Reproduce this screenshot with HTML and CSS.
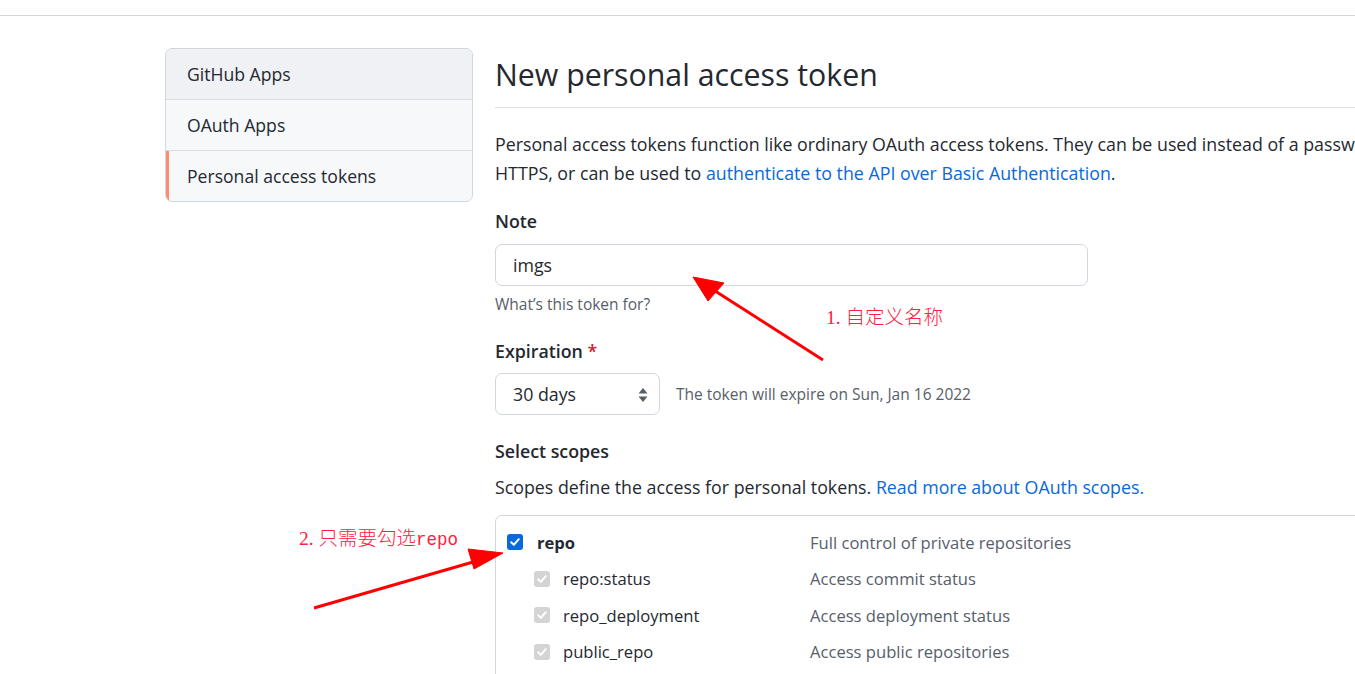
FILE: index.html
```html
<!DOCTYPE html>
<html lang="en">
<head>
<meta charset="utf-8">
<title>New personal access token</title>
<link rel="stylesheet" href="styles.css">
</head>
<body>
<div class="topbar"></div>
<div class="layout">
  <nav class="sidebar">
    <a class="side-item hovered">GitHub Apps</a>
    <a class="side-item">OAuth Apps</a>
    <a class="side-item selected">Personal access tokens</a>
  </nav>
  <main class="main">
    <h2 class="subhead">New personal access token</h2>
    <p class="intro">Personal access tokens function like ordinary OAuth access tokens. They can be used instead of a password for Git over HTTPS, or can be used to <a class="link">authenticate to the API over Basic Authentication</a>.</p>

    <label class="field-label">Note</label>
    <div class="input">imgs</div>
    <p class="hint">What’s this token for?</p>

    <label class="field-label exp-label">Expiration <span class="req">*</span></label>
    <div class="exp-row">
      <div class="select">30 days
        <svg class="updown" width="10" height="16" viewBox="0 0 10 16"><path d="M5 1 L9.5 6.5 H0.5 Z M5 15 L9.5 9.5 H0.5 Z" fill="#57606a"/></svg>
      </div>
      <span class="exp-note">The token will expire on Sun, Jan 16 2022</span>
    </div>

    <label class="field-label scopes-label">Select scopes</label>
    <p class="scopes-desc">Scopes define the access for personal tokens. <a class="link">Read more about OAuth scopes.</a></p>

    <div class="scopes">
      <div class="scope-row">
        <div class="scope-name">
          <span class="cb checked"><svg width="12" height="12" viewBox="0 0 12 12"><path d="M2.2 6.3 L4.8 8.8 L9.8 3.2" stroke="#fff" stroke-width="2" fill="none" stroke-linecap="round" stroke-linejoin="round"/></svg></span>
          <strong>repo</strong>
        </div>
        <div class="scope-desc">Full control of private repositories</div>
      </div>
      <div class="scope-row sub">
        <div class="scope-name">
          <span class="cb disabled"><svg width="12" height="12" viewBox="0 0 12 12"><path d="M2.2 6.3 L4.8 8.8 L9.8 3.2" stroke="#fff" stroke-width="2" fill="none" stroke-linecap="round" stroke-linejoin="round"/></svg></span>
          <span>repo:status</span>
        </div>
        <div class="scope-desc">Access commit status</div>
      </div>
      <div class="scope-row sub">
        <div class="scope-name">
          <span class="cb disabled"><svg width="12" height="12" viewBox="0 0 12 12"><path d="M2.2 6.3 L4.8 8.8 L9.8 3.2" stroke="#fff" stroke-width="2" fill="none" stroke-linecap="round" stroke-linejoin="round"/></svg></span>
          <span>repo_deployment</span>
        </div>
        <div class="scope-desc">Access deployment status</div>
      </div>
      <div class="scope-row sub">
        <div class="scope-name">
          <span class="cb disabled"><svg width="12" height="12" viewBox="0 0 12 12"><path d="M2.2 6.3 L4.8 8.8 L9.8 3.2" stroke="#fff" stroke-width="2" fill="none" stroke-linecap="round" stroke-linejoin="round"/></svg></span>
          <span>public_repo</span>
        </div>
        <div class="scope-desc">Access public repositories</div>
      </div>
    </div>
  </main>
</div>

<div class="annot annot-1">1. 自定义名称</div>
<div class="annot annot-2">2. 只需要勾选<span class="mono">repo</span></div>
<svg class="arrows" width="1355" height="674" viewBox="0 0 1355 674">
  <g fill="#ff0000" stroke="#ff0000">
    <line x1="823" y1="360" x2="712" y2="289" stroke-width="3"/>
    <polygon points="693,277 724,283 708,301" stroke-width="1"/>
    <line x1="314" y1="608" x2="480" y2="560" stroke-width="3"/>
    <polygon points="503,553 468,549 474,569" stroke-width="1"/>
  </g>
</svg>
</body>
</html>
```

FILE: styles.css
```css
html, body {
  margin: 0;
  padding: 0;
  overflow: hidden;
  background: #ffffff;
}
body {
  width: 1355px;
  height: 674px;
  position: relative;
  font-family: "Open Sans", "Noto Sans", "Liberation Sans", sans-serif;
  font-size: 17.8px;
  color: #24292f;
}
.topbar {
  height: 15px;
  border-bottom: 1px solid #d0d7de;
}
.layout {
  display: flex;
  align-items: flex-start;
  padding-left: 165px;
  margin-top: 32px;
}
.sidebar {
  width: 306px;
  flex: none;
  border: 1px solid #d0d7de;
  border-radius: 7px;
  overflow: hidden;
  display: flex;
  flex-direction: column;
  background: #f6f8fa;
  font-size: 17.6px;
}
.side-item {
  display: block;
  height: 50px;
  line-height: 51px;
  padding-left: 21px;
  color: #24292f;
  border-top: 1px solid #d8dee4;
  position: relative;
}
.side-item:first-child { border-top: none; }
.side-item.hovered { background: #eff1f4; }
.side-item.selected::before {
  content: "";
  position: absolute;
  left: 0; top: 0; bottom: 0;
  width: 3px;
  background: #fd8c73;
}
.main {
  margin-left: 22px;
  width: 1100px;
  flex: none;
}
.subhead {
  margin: 0;
  padding: 6px 0 12px;
  font-size: 30.3px;
  font-weight: 400;
  line-height: 41px;
  border-bottom: 1px solid #d8dee4;
}
.intro {
  margin: 22px 0 0;
  line-height: 29px;
  width: 1010px;
}
.link { color: #0969da; text-decoration: none; }
.field-label {
  display: block;
  font-weight: 600;
  line-height: 24px;
  margin-top: 21px;
}
.input {
  margin-top: 11px;
  height: 40px;
  border: 1px solid #d0d7de;
  border-radius: 7px;
  padding-left: 17px;
  line-height: 40px;
  width: 574px;
}
.hint {
  margin: 8px 0 0;
  font-size: 15.5px;
  line-height: 20px;
  color: #57606a;
}
.exp-label { margin-top: 25px; }
.req { color: #cf222e; }
.exp-row {
  display: flex;
  align-items: center;
  margin-top: 10px;
  gap: 16px;
}
.select {
  width: 146px;
  height: 40px;
  border: 1px solid #d0d7de;
  border-radius: 7px;
  padding-left: 17px;
  line-height: 40px;
  position: relative;
}
.updown {
  position: absolute;
  right: 11px;
  top: 13px;
}
.exp-note {
  font-size: 15.5px;
  color: #57606a;
}
.scopes-label { margin-top: 24px; }
.scopes-desc {
  margin: 11px 0 0;
  line-height: 26px;
}
.scopes {
  margin-top: 15px;
  border: 1px solid #d0d7de;
  border-radius: 7px;
  padding: 8px 0 20px 11px;
  font-size: 16.6px;
}
.scope-row {
  display: flex;
  align-items: center;
  height: 36.5px;
}
.scope-name {
  width: 303px;
  flex: none;
  display: flex;
  align-items: center;
  gap: 14px;
}
.scope-row.sub .scope-name { padding-left: 27px; width: 276px; gap: 13px; }
.scope-desc { color: #57606a; }
.cb {
  width: 16px;
  height: 16px;
  border-radius: 3px;
  display: inline-flex;
  align-items: center;
  justify-content: center;
  flex: none;
}
.cb.checked { background: #0969da; }
.cb.disabled { background: #d4d4d4; }
.annot {
  position: absolute;
  font-family: "Liberation Serif", "Noto Sans CJK SC", serif;
  font-size: 19.5px;
  font-weight: 300;
  color: #ff2040;
  line-height: 20px;
  white-space: nowrap;
}
.annot .mono {
  font-family: "Liberation Mono", monospace;
  font-size: 17.5px;
  font-weight: 400;
}
.annot-1 { left: 826px; top: 308px; }
.annot-2 { left: 299px; top: 529px; }
.arrows {
  position: absolute;
  left: 0;
  top: 0;
  pointer-events: none;
}
```
